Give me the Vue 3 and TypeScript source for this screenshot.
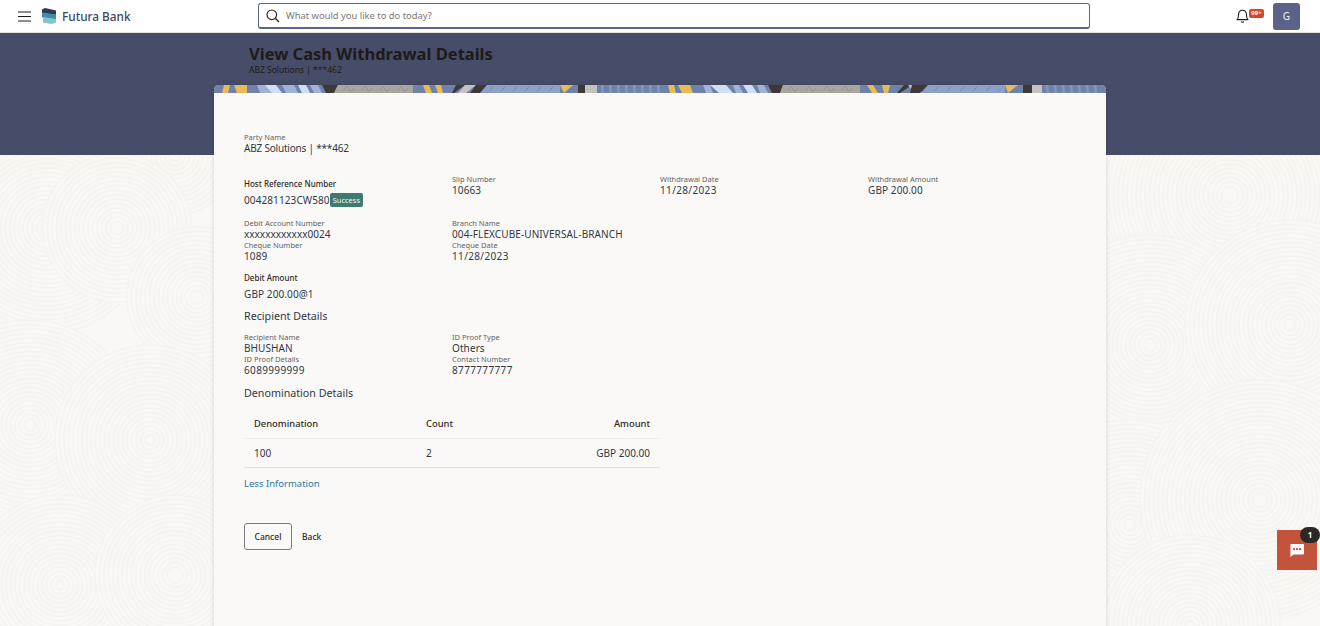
<script setup lang="ts">
type Disc = { x: number; y: number; r: number }
const discs: Disc[] = [
  { x: 390, y: 70, r: 150 }, { x: 1230, y: 40, r: 130 }, { x: 175, y: 0, r: 60 },
  { x: 47, y: 73, r: 105 }, { x: 117, y: 73, r: 74 }, { x: 197, y: 142, r: 70 },
  { x: 30, y: 270, r: 105 }, { x: 150, y: 285, r: 95 }, { x: 60, y: 430, r: 90 },
  { x: 175, y: 420, r: 80 }, { x: 1150, y: 190, r: 110 }, { x: 1290, y: 170, r: 105 },
  { x: 1130, y: 370, r: 105 }, { x: 1260, y: 345, r: 120 }, { x: 1190, y: 470, r: 90 },
]
const ringsOf = (r: number) => Array.from({ length: Math.floor(r / 4.5) }, (_, i) => r - i * 4.5)

type Piece = { pts: string; fill: string }
const Y = '#e7bb55', P = '#d0dff5', M = '#a0b2d6', D = '#3d3935', G = '#a8a69f', L = '#c3c2bc', H = '#8fa0c8', B = '#6f82aa'
const piece = (a: number, b: number, c: number, d: number, fill: string): Piece => ({ pts: `${a},0 ${b},0 ${c},8 ${d},8`, fill })
const strip: Piece[] = [
  piece(0, 892, 892, 0, B),
  piece(10, 16, 14, 8, Y), piece(20, 33, 33, 23, Y),
  piece(43, 53, 58, 46, M), piece(51, 62, 68, 58, P), piece(68, 80, 84, 72, M),
  piece(84, 92, 96, 88, P), piece(96, 104, 108, 100, M),
  piece(108, 124, 120, 112, D), piece(124, 199, 199, 120, G),
  piece(209, 215, 218, 212, Y), piece(221, 227, 229, 224, Y),
  piece(242, 251, 240, 238, D), piece(251, 262, 252, 244, L), piece(262, 273, 268, 256, D), piece(273, 346, 346, 266, H),
  piece(346, 359, 350, 350, Y), piece(364, 371, 371, 364, D), piece(371, 383, 383, 371, L),
  piece(454, 460, 462, 456, Y), piece(464, 476, 479, 468, Y),
  piece(489, 496, 499, 492, M), piece(496, 512, 519, 505, P), piece(519, 525, 529, 522, M),
  piece(529, 538, 543, 534, P), piece(543, 550, 554, 546, M),
  piece(554, 569, 566, 558, D), piece(569, 646, 646, 566, G),
  piece(653, 659, 664, 658, Y), piece(668, 676, 674, 670, Y),
  piece(690, 698, 686, 683, D), piece(694, 702, 708, 700, L), piece(698, 714, 706, 696, D), piece(714, 791, 791, 708, H),
  piece(791, 804, 794, 794, Y), piece(809, 818, 818, 809, D), piece(818, 828, 828, 818, L),
]
const hatch = [275, 287, 299, 311, 323, 335, 720, 733, 746, 759, 772, 785]
const bars = [388, 396, 404, 412, 420, 428, 436, 444, 833, 841, 849, 857, 865, 873, 881]
const swirls = [130, 148, 166, 184, 574, 592, 610, 628]
</script>

<template>
  <div class="page">
    <svg class="texture" width="1320" height="471" viewBox="0 0 1320 471" aria-hidden="true">
      <rect width="1320" height="471" fill="#f9f8f5" />
      <g v-for="(d, i) in discs" :key="i">
        <circle :cx="d.x" :cy="d.y" :r="d.r" fill="#f9f8f5" />
        <circle v-for="r in ringsOf(d.r)" :key="r" :cx="d.x" :cy="d.y" :r="r" fill="none" stroke="#f5f4f0" stroke-width="1.8" />
      </g>
    </svg>

    <header class="topbar">
      <div class="brand">
        <svg class="burger" width="14" height="11" viewBox="0 0 14 11" aria-hidden="true">
          <path d="M0 1h13M0 5.5h13M0 10h13" stroke="#1f1d1b" stroke-width="1.2" fill="none" />
        </svg>
        <svg class="logo" width="15" height="16" viewBox="0 0 15 16" aria-hidden="true">
          <path d="M0 1.5 3 0l11 2.5V7L0 5z" fill="#2f3a5f" />
          <path d="M0 4.5 14 6.5v5L0 9.5z" fill="#3f8fa3" />
          <path d="M1 9l13 2v3.5L9.5 16 1 14.5z" fill="#82c4cf" />
        </svg>
        <span class="brand-name">Futura Bank</span>
      </div>
      <div class="search">
        <svg width="14" height="14" viewBox="0 0 14 14" aria-hidden="true">
          <circle cx="5.8" cy="5.8" r="4.8" fill="none" stroke="#2a2826" stroke-width="1.2" />
          <path d="M9.3 9.3 13 13" stroke="#2a2826" stroke-width="1.3" />
        </svg>
        <span class="placeholder">What would you like to do today?</span>
      </div>
      <div class="tools">
        <span class="bell">
          <svg width="13" height="15" viewBox="0 0 13 15" aria-hidden="true">
            <path d="M1 10.6c1.2-1 1.5-2 1.5-4.4C2.5 3.4 4 1.2 6.5 1.2s4 2.2 4 5c0 2.4.3 3.4 1.5 4.4z" fill="none" stroke="#1f1d1b" stroke-width="1.1" stroke-linejoin="round" />
            <path d="M5 12.6c.7.8 2.3.8 3 0" fill="none" stroke="#1f1d1b" stroke-width="1.1" />
          </svg>
          <span class="count">99+</span>
        </span>
        <span class="avatar">G</span>
      </div>
    </header>

    <section class="band">
      <div class="band-text">
        <h1>View Cash Withdrawal Details</h1>
        <p>ABZ Solutions | ***462</p>
      </div>
    </section>

    <main class="card">
      <svg class="strip" width="892" height="8" viewBox="0 0 892 8" aria-hidden="true">
        <polygon v-for="(p, i) in strip" :key="i" :points="p.pts" :fill="p.fill" />
        <path v-for="x in hatch" :key="'h' + x" :d="`M${x + 4} 2 L${x} 6`" stroke="#6f82aa" stroke-width=".8" />
        <path v-for="x in bars" :key="'b' + x" :d="`M${x} 0 L${x + 1} 8`" stroke="#8496bb" stroke-width="2.5" />
        <path v-for="x in swirls" :key="'s' + x" :d="`M${x} 5c2-4 4-4 5-1s3 3 5-1`" stroke="#8d8b84" stroke-width=".7" fill="none" />
      </svg>
      <div class="body">
        <div class="field party">
          <label>Party Name</label>
          <div class="val tight">ABZ Solutions | ***462</div>
        </div>

        <div class="grid first">
          <div class="host">
            <div class="strong-label">Host Reference Number</div>
            <div class="val-row"><span class="val">004281123CW580</span><span class="badge">Success</span></div>
          </div>
          <div class="field"><label>Slip Number</label><div class="val">10663</div></div>
          <div class="field"><label>Withdrawal Date</label><div class="val wide">11/28/2023</div></div>
          <div class="field"><label>Withdrawal Amount</label><div class="val">GBP 200.00</div></div>
        </div>

        <div class="grid">
          <div class="field"><label>Debit Account Number</label><div class="val mask">xxxxxxxxxxxx0024</div></div>
          <div class="field"><label>Branch Name</label><div class="val">004-FLEXCUBE-UNIVERSAL-BRANCH</div></div>
          <div class="field row2 col1"><label>Cheque Number</label><div class="val">1089</div></div>
          <div class="field row2 col2"><label>Cheque Date</label><div class="val wide">11/28/2023</div></div>
        </div>

        <div class="debit">
          <div class="strong-label">Debit Amount</div>
          <div class="val debit-val">GBP 200.00@1</div>
        </div>

        <h2 class="recipient">Recipient Details</h2>
        <div class="grid third">
          <div class="field"><label>Recipient Name</label><div class="val">BHUSHAN</div></div>
          <div class="field"><label>ID Proof Type</label><div class="val">Others</div></div>
          <div class="field row2 col1"><label>ID Proof Details</label><div class="val wide">6089999999</div></div>
          <div class="field row2 col2"><label>Contact Number</label><div class="val wide">8777777777</div></div>
        </div>

        <h2 class="denom">Denomination Details</h2>
        <table class="table">
          <thead>
            <tr><th class="c1">Denomination</th><th class="c2">Count</th><th class="c3">Amount</th></tr>
          </thead>
          <tbody>
            <tr><td class="c1">100</td><td class="c2">2</td><td class="c3">GBP 200.00</td></tr>
          </tbody>
        </table>
        <a class="less">Less Information</a>
        <div class="actions">
          <button class="cancel" type="button">Cancel</button>
          <button class="back" type="button">Back</button>
        </div>
      </div>
    </main>

    <div class="chat">
      <svg width="16" height="14" viewBox="0 0 18 16" aria-hidden="true">
        <path d="M2 1h14a1 1 0 0 1 1 1v10a1 1 0 0 1-1 1H5l-3.5 3V2A1 1 0 0 1 2 1z" fill="#fff" />
        <circle cx="5.5" cy="7" r="1.3" fill="#c4533c" /><circle cx="9" cy="7" r="1.3" fill="#c4533c" /><circle cx="12.5" cy="7" r="1.3" fill="#c4533c" />
      </svg>
      <span class="chat-count">1</span>
    </div>
  </div>
</template>

<style scoped>
.page {
  position: relative;
  width: 1320px;
  height: 626px;
  overflow: hidden;
  font-family: "Noto Sans", "Open Sans", sans-serif;
  color: #26241f;
  background: #f9f8f5;
}
.texture { position: absolute; left: 0; top: 155px; }

.topbar {
  position: relative;
  height: 33px;
  box-sizing: border-box;
  border-bottom: 1px solid #e4e3df;
  background: #fff;
  display: flex;
  align-items: center;
}
.brand { display: flex; align-items: center; width: 258px; padding-left: 18px; box-sizing: border-box; }
.burger { margin-right: 10px; }
.logo { margin-right: 5px; }
.brand-name { font-size: 11.8px; font-weight: 500; color: #3f4666; }
.search {
  width: 832px;
  height: 26px;
  box-sizing: border-box;
  border: 1px solid #5a648f;
  border-bottom-width: 2px;
  border-radius: 3px;
  display: flex;
  align-items: center;
  padding-left: 7px;
  gap: 6px;
}
.placeholder { font-size: 9.4px; color: #7b7974; }
.tools { display: flex; align-items: center; margin-left: 146px; }
.bell { display: flex; align-items: flex-start; width: 37px; }
.count {
  background: #d9442b;
  color: #fff;
  font-size: 6px;
  font-weight: 700;
  line-height: 9px;
  width: 15px;
  text-align: center;
  border-radius: 2px;
}
.avatar {
  width: 27px;
  height: 27px;
  border-radius: 3px;
  background: #5c6389;
  color: #f4f4f4;
  font-size: 10px;
  display: flex;
  align-items: center;
  justify-content: center;
}

.band {
  position: relative;
  height: 122px;
  background: #474c69;
}
.band-text { padding: 11px 0 0 249px; color: #1d1b18; }
h1 { margin: 0; font-size: 16.5px; line-height: 20px; font-weight: 700; }
.band-text p { margin: 0; font-size: 8.5px; line-height: 11px; }

.card {
  position: absolute;
  left: 214px;
  top: 85px;
  width: 892px;
  height: 560px;
  background: #fbf9f8;
  border-radius: 5px 5px 0 0;
  box-shadow: 0 0 5px rgba(0, 0, 0, .14);
  overflow: hidden;
}
.strip { display: block; }
.body { padding: 39px 30px 0; }

label { display: block; font-size: 7.5px; line-height: 11px; color: #63615c; }
.val { font-size: 10px; line-height: 11px; color: #2f3845; letter-spacing: .1px; }
.val.tight { letter-spacing: -.2px; }
.val.wide { letter-spacing: .35px; }
.val.mask { letter-spacing: 0; }
.grid { display: grid; grid-template-columns: repeat(4, 208px); }
.strong-label { font-size: 8px; font-weight: 500; line-height: 11px; color: #2c2a26; }
.first { margin-top: 20px; height: 44px; }
.host .strong-label { margin-top: 4px; }
.val-row { display: flex; align-items: center; margin-top: 4px; }
.badge {
  background: #3d7b70;
  color: #f4f8f6;
  font-size: 7.5px;
  line-height: 14px;
  padding: 0 3px;
  border-radius: 2px;
}
.row2 { grid-row: 2; }
.col1 { grid-column: 1; }
.col2 { grid-column: 2; }
.debit { margin-top: 10px; }
.debit-val { margin-top: 6px; }
h2 { margin: 0; font-size: 10.7px; font-weight: 400; line-height: 14px; color: #2f3845; }
.recipient { margin-top: 9px; }
.third { margin-top: 9px; }
.denom { margin-top: 10px; }

.table {
  border-collapse: collapse;
  width: 416px;
  margin-top: 8px;
  table-layout: fixed;
}
th { font-weight: 500; font-size: 9.4px; height: 30px; border-bottom: 1px solid #f1efeb; padding: 0; color: #2c2a26; }
td { font-size: 10px; height: 28px; border-bottom: 1px solid #e2e0dc; padding: 0; color: #2f3845; }
.c1 { width: 182px; text-align: left; padding-left: 10px; box-sizing: border-box; }
.c2 { width: 122px; text-align: left; }
.c3 { text-align: right; padding-right: 10px; }
.less { display: block; margin-top: 10px; font-size: 9.5px; line-height: 12px; color: #2a7a9a; }
.actions { display: flex; align-items: center; margin-top: 33px; gap: 10px; }
button { font-family: inherit; background: none; padding: 0; font-size: 8.5px; font-weight: 500; color: #2c2a26; }
.cancel { width: 48px; height: 27px; border: 1px solid #7f7d78; border-radius: 3px; }
.back { border: none; }

.chat {
  position: absolute;
  left: 1277px;
  top: 530px;
  width: 40px;
  height: 40px;
  background: #c4533c;
  display: flex;
  align-items: center;
  justify-content: center;
}
.chat-count {
  position: absolute;
  left: 23px;
  top: -3px;
  width: 20px;
  height: 16px;
  border-radius: 8px;
  background: #2b2826;
  color: #fff;
  font-size: 8px;
  font-weight: 700;
  line-height: 16px;
  text-align: center;
}
</style>
